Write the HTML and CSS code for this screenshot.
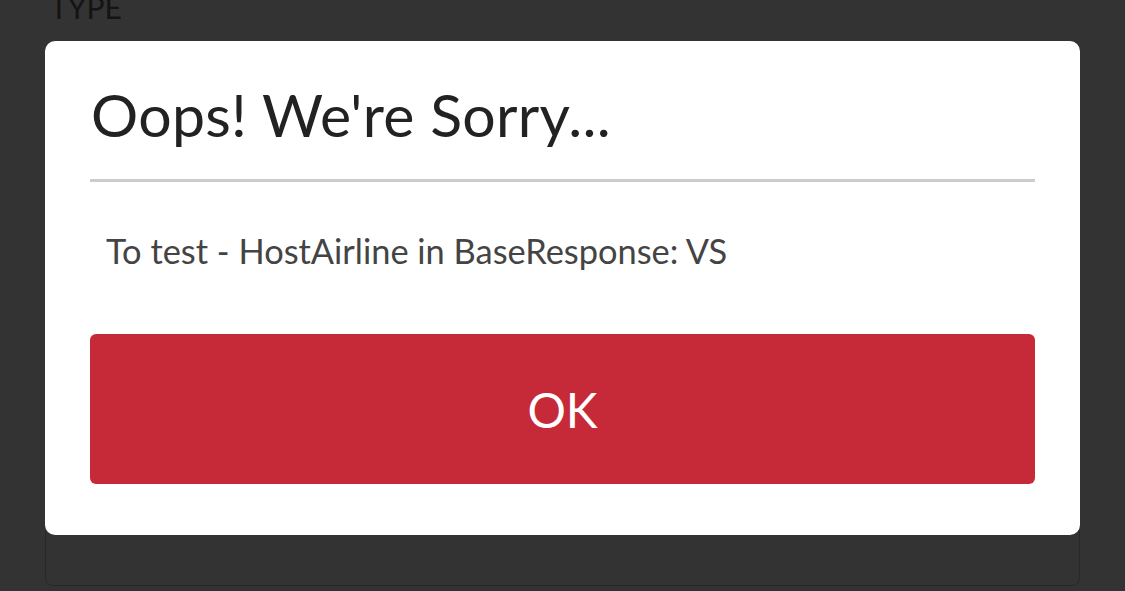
FILE: index.html
```html
<!DOCTYPE html>
<html lang="en">
<head>
    <meta charset="UTF-8">
    <meta name="viewport" content="width=device-width, initial-scale=1.0">
    <title>Booking</title>
    <link rel="stylesheet" href="styles.css">
</head>
<body>
    <div class="screen">
        <div class="field-label">TYPE</div>
        <div class="panel">
            <div class="dialog">
                <h1 class="dialog-title">Oops! We're Sorry...</h1>
                <p class="dialog-message">To test - HostAirline in BaseResponse: VS</p>
                <button class="dialog-button">OK</button>
            </div>
        </div>
    </div>
</body>
</html>
```

FILE: styles.css
```css
body {
    margin: 0;
    padding: 0;
    background-color: #333333;
    font-family: 'Lato', 'Open Sans', sans-serif;
    overflow: hidden;
}
.screen {
    height: 591px;
    padding: 0 45px;
}
.field-label {
    height: 20px;
    line-height: 15px;
    font-size: 30px;
    color: #141414;
    padding-left: 5px;
    overflow: hidden;
}
.panel {
    margin-top: 21px;
    height: 545px;
    border: 1px solid #282828;
    border-radius: 8px;
    box-sizing: border-box;
}
/* the alert sits over the panel */
.dialog {
    margin: -1px;
    background-color: #ffffff;
    border-radius: 10px;
    padding: 0 45px;
    height: 494px;
    box-sizing: border-box;
}
.dialog-title {
    margin: 0;
    padding: 44px 0 35px 1px;
    font-size: 59px;
    font-weight: normal;
    letter-spacing: 0.3px;
    line-height: 59px;
    color: #222222;
    border-bottom: 3px solid #cccccc;
}
.dialog-message {
    margin: 0;
    padding: 52px 0 0 16px;
    font-size: 34.4px;
    line-height: 34px;
    color: #444444;
}
.dialog-button {
    display: block;
    width: 100%;
    height: 150px;
    margin-top: 66px;
    border: none;
    border-radius: 6px;
    background-color: #c62a38;
    color: #ffffff;
    font-family: inherit;
    font-size: 48px;
    cursor: pointer;
}
```
